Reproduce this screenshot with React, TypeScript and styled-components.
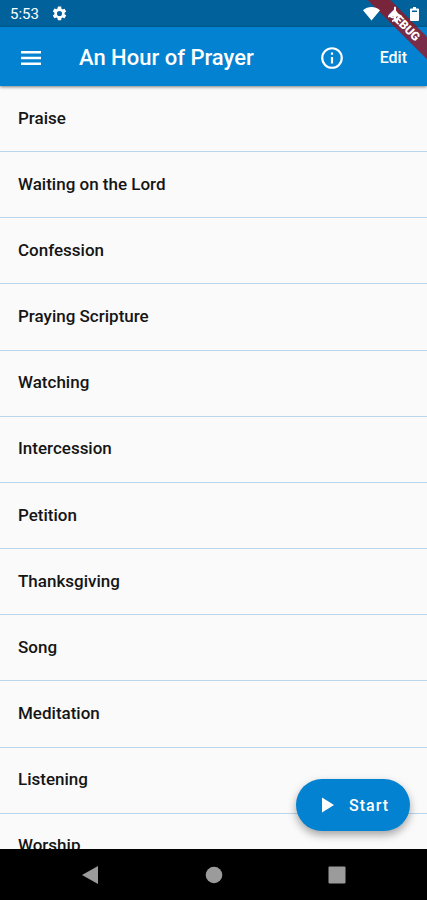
import React from "react";
import styled, { createGlobalStyle } from "styled-components";

const GlobalStyle = createGlobalStyle`
  * { box-sizing: border-box; }
  html, body, #root { height: 100%; margin: 0; }
  body { font-family: Roboto, "Noto Sans", sans-serif; background: #000; }
  button { font: inherit; border: 0; padding: 0; background: none; color: inherit; cursor: pointer; }
`;

const Screen = styled.div`
  position: relative;
  display: flex;
  flex-direction: column;
  height: 100vh;
  overflow: hidden;
  background: #fafafa;
`;

const StatusBar = styled.div`
  display: flex;
  align-items: center;
  flex: none;
  height: 27px;
  padding: 0 8px 0 10px;
  gap: 12px;
  background: #01619b;
  color: #fff;
  font-size: 15px;
  svg { display: block; }
`;

const StatusIcons = styled.div`
  position: relative;
  z-index: 3;
  display: flex;
  align-items: center;
  gap: 8px;
  margin-left: auto;
`;

const AppBar = styled.header`
  position: relative;
  z-index: 1;
  display: flex;
  align-items: center;
  flex: none;
  height: 59px;
  padding: 2px 20px 0 18px;
  background: #0282d0;
  color: #fff;
  box-shadow: 0 1px 3px rgba(0, 0, 0, 0.5);
`;

const Title = styled.h1`
  flex: 1;
  margin: 0 0 0 35px;
  font-size: 22px;
  font-weight: 500;
  line-height: 28px;
  white-space: nowrap;
`;

const IconButton = styled.button`
  display: grid;
  place-items: center;
  width: 26px;
  height: 40px;
`;

const EditButton = styled.button`
  height: 40px;
  margin-left: 35px;
  font-size: 16px;
  font-weight: 500;
`;

const Content = styled.main`
  flex: 1;
  min-height: 0;
  overflow: hidden;
`;

const TopicList = styled.ul`
  display: grid;
  grid-auto-rows: 1fr;
  min-height: 794px;
  margin: 0;
  padding: 0;
  list-style: none;
`;

const Topic = styled.li`
  display: flex;
  align-items: center;
  padding: 0 18px 2px;
  border-bottom: 1px solid #b9d6ec;
  color: #151515;
  font-size: 17px;
  font-weight: 500;
  line-height: 24px;
`;

const StartButton = styled.button`
  position: absolute;
  right: 17px;
  bottom: 69px;
  display: flex;
  align-items: center;
  gap: 10px;
  height: 52px;
  padding: 0 21px 0 19px;
  border-radius: 26px;
  background: #0282d0;
  color: #fff;
  font-size: 16px;
  font-weight: 500;
  letter-spacing: 1px;
  box-shadow: 0 4px 8px rgba(0, 0, 0, 0.35);
`;

const NavBar = styled.nav`
  display: flex;
  align-items: center;
  justify-content: space-between;
  flex: none;
  height: 51px;
  padding: 0 77px;
  background: #000;
  color: #9b9b9b;
`;

const BannerCorner = styled.div`
  position: absolute;
  z-index: 2;
  top: 0;
  right: 0;
  width: 64px;
  height: 64px;
  overflow: hidden;
  pointer-events: none;
`;

const Banner = styled.div`
  position: absolute;
  top: 16px;
  left: -20px;
  width: 120px;
  height: 16px;
  padding-left: 4px;
  background: rgba(154, 20, 32, 0.78);
  color: #fff;
  font-size: 12px;
  font-weight: 900;
  line-height: 16px;
  text-align: center;
  transform: rotate(45deg);
`;

const topics = [
  "Praise", "Waiting on the Lord", "Confession", "Praying Scripture",
  "Watching", "Intercession", "Petition", "Thanksgiving", "Song",
  "Meditation", "Listening", "Worship",
];

const GearIcon = () => (
  <svg width="17" height="17" viewBox="0 0 24 24" fill="currentColor">
    <path d="M19.14 12.94c.04-.3.06-.61.06-.94s-.02-.64-.07-.94l2.03-1.58a.49.49 0 0 0 .12-.61l-1.92-3.32a.49.49 0 0 0-.59-.22l-2.39.96c-.5-.38-1.03-.7-1.62-.94l-.36-2.54A.48.48 0 0 0 13.92 2h-3.84a.48.48 0 0 0-.47.41l-.36 2.54c-.59.24-1.13.57-1.62.94l-2.39-.96a.48.48 0 0 0-.59.22L2.74 8.87a.48.48 0 0 0 .12.61l2.03 1.58c-.05.3-.09.63-.09.94s.02.64.07.94l-2.03 1.58a.49.49 0 0 0-.12.61l1.92 3.32c.12.22.37.29.59.22l2.39-.96c.5.38 1.03.7 1.62.94l.36 2.54c.05.24.24.41.48.41h3.84c.24 0 .44-.17.47-.41l.36-2.54c.59-.24 1.13-.56 1.62-.94l2.39.96c.22.08.47 0 .59-.22l1.92-3.32a.48.48 0 0 0-.12-.61zM12 15.6A3.6 3.6 0 1 1 12 8.4a3.6 3.6 0 0 1 0 7.2z" />
  </svg>
);

const App = () => (
  <>
    <GlobalStyle />
    <Screen>
      <StatusBar>
        <span>5:53</span>
        <GearIcon />
        <StatusIcons>
          <svg width="17" height="14" viewBox="0 0 17 14" fill="currentColor">
            <path d="M0 3.2C5-1 12-1 17 3.2L8.500 13.500z" />
          </svg>
          <svg width="14" height="16" viewBox="0 0 14 16" fill="currentColor">
            <path d="M6 1.500q1-2 2 0V6l6 4v1.500L8 10v3l2 1.500V16l-3-1-3 1v-1.500L6 13v-3L0 11.500V10l6-4z" />
          </svg>
          <svg width="9" height="14" viewBox="0 0 9 14" fill="currentColor" fillRule="evenodd">
            <path d="M3 0h3v1.400h2q1 0 1 1V13q0 1-1 1H1q-1 0-1-1V2.400q0-1 1-1h2zM2 3.600v1.400h5V3.600z" />
          </svg>
        </StatusIcons>
      </StatusBar>
      <AppBar>
        <IconButton aria-label="Open menu">
          <svg width="20" height="14" viewBox="0 0 20 14" fill="currentColor">
            <path d="M0 0h20v2.600H0zM0 5.700h20v2.600H0zM0 11.400h20V14H0z" />
          </svg>
        </IconButton>
        <Title>An Hour of Prayer</Title>
        <IconButton aria-label="Information">
          <svg width="26" height="26" viewBox="0 0 24 24" fill="currentColor">
            <path d="M11 7h2v2h-2zm0 4h2v6h-2zm1-9a10 10 0 1 0 0 20 10 10 0 0 0 0-20zm0 18a8 8 0 1 1 0-16 8 8 0 0 1 0 16z" />
          </svg>
        </IconButton>
        <EditButton>Edit</EditButton>
      </AppBar>
      <Content>
        <TopicList>
          {topics.map((topic) => <Topic key={topic}>{topic}</Topic>)}
        </TopicList>
      </Content>
      <StartButton>
        <svg width="24" height="24" viewBox="0 0 24 24" fill="currentColor">
          <path d="M7 4.500v15L19 12z" />
        </svg>
        Start
      </StartButton>
      <NavBar>
        <IconButton aria-label="Back">
          <svg width="18" height="20" viewBox="0 0 18 20" fill="currentColor"><path d="M17 1v18L1 10z" /></svg>
        </IconButton>
        <IconButton aria-label="Home">
          <svg width="18" height="18" viewBox="0 0 18 18" fill="currentColor"><circle cx="9" cy="9" r="8.300" /></svg>
        </IconButton>
        <IconButton aria-label="Recent apps">
          <svg width="18" height="18" viewBox="0 0 18 18" fill="currentColor"><rect x="0.500" y="0.500" width="17" height="17" rx="1" /></svg>
        </IconButton>
      </NavBar>
      <BannerCorner><Banner>DEBUG</Banner></BannerCorner>
    </Screen>
  </>
);

export default App;
